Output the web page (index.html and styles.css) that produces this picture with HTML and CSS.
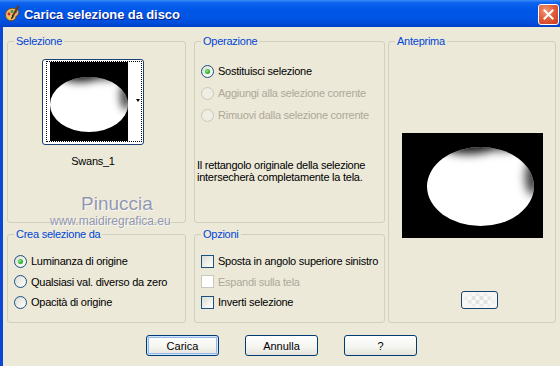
FILE: index.html
```html
<!DOCTYPE html>
<html lang="it">
<head>
    <meta charset="UTF-8">
    <title>Carica selezione da disco</title>
    <link rel="stylesheet" href="styles.css">
</head>
<body>
    <div class="window">
        <div class="titlebar">
            <svg class="app-icon" width="17" height="18" viewBox="0 0 17 18">
                <path d="M1.5 10 C1.5 5 6 2.5 10.5 3.5 C15 4.5 16 8.5 13 10.5 C11 11.8 12.5 13.5 10 15 C6 17 1.5 14.5 1.5 10Z" fill="#E9B774" stroke="#7A4A14" stroke-width="1"/>
                <circle cx="5" cy="9" r="1.4" fill="#D8261E"/>
                <circle cx="8" cy="6.5" r="1.4" fill="#2AA630"/>
                <circle cx="11.5" cy="7" r="1.3" fill="#2250D8"/>
                <circle cx="6" cy="12.8" r="1.4" fill="#F2D82A"/>
                <path d="M14.5 0.8 L8.5 11.5" stroke="#6B3A10" stroke-width="2"/>
                <path d="M9 10.5 L7.2 13.8 L8.8 12.6Z" fill="#222" stroke="#222" stroke-width="1"/>
            </svg>
            <span class="title">Carica selezione da disco</span>
            <button class="close" type="button">
                <svg width="11" height="11" viewBox="0 0 11 11">
                    <path d="M1.5 1.5 L9.5 9.5 M9.5 1.5 L1.5 9.5" stroke="#fff" stroke-width="2" stroke-linecap="square"/>
                </svg>
            </button>
        </div>

        <div class="client">
            <div class="groups">
                <fieldset class="group g-sel">
                    <legend>Selezione</legend>
                    <div class="picker">
                        <div class="thumb">
                            <div class="thumb-focus">
                                <svg width="78" height="79" viewBox="0 0 78 79">
                                    <defs>
                                        <clipPath id="clip1">
                                            <ellipse cx="39" cy="42.5" rx="39" ry="27.5"/>
                                        </clipPath>
                                        <filter id="soft1" x="-50%" y="-50%" width="200%" height="200%">
                                            <feGaussianBlur stdDeviation="4"/>
                                        </filter>
                                    </defs>
                                    <rect width="78" height="79" fill="#000"/>
                                    <g clip-path="url(#clip1)">
                                        <rect width="78" height="79" fill="#fff"/>
                                        <g filter="url(#soft1)">
                                            <ellipse cx="30" cy="13" rx="20" ry="7" fill="#000" opacity="0.9"/>
                                            <ellipse cx="55" cy="13" rx="16" ry="5" fill="#000" opacity="0.7"/>
                                            <ellipse cx="76" cy="34" rx="6" ry="14" fill="#000" opacity="0.75"/>
                                        </g>
                                    </g>
                                </svg>
                                <div class="thumb-arrow"><span></span></div>
                            </div>
                        </div>
                        <div class="caption">Swans_1</div>
                    </div>
                </fieldset>

                <fieldset class="group g-op">
                    <legend>Operazione</legend>
                    <div class="options">
                        <div class="row"><span class="radio checked"></span>Sostituisci selezione</div>
                        <div class="row disabled"><span class="radio"></span>Aggiungi alla selezione corrente</div>
                        <div class="row disabled"><span class="radio"></span>Rimuovi dalla selezione corrente</div>
                    </div>
                    <p class="note">Il rettangolo originale della selezione intersecherà completamente la tela.</p>
                </fieldset>

                <fieldset class="group g-prev">
                    <legend>Anteprima</legend>
                    <div class="preview">
                        <svg width="141" height="105" viewBox="0 0 141 105">
                            <defs>
                                <clipPath id="clip2">
                                    <ellipse cx="78.5" cy="53.5" rx="53.5" ry="39.5"/>
                                </clipPath>
                                <filter id="soft2" x="-50%" y="-50%" width="200%" height="200%">
                                    <feGaussianBlur stdDeviation="5"/>
                                </filter>
                            </defs>
                            <rect width="141" height="105" fill="#000"/>
                            <g clip-path="url(#clip2)">
                                <rect width="141" height="105" fill="#fff"/>
                                <g filter="url(#soft2)">
                                    <ellipse cx="66" cy="12" rx="28" ry="9" fill="#000" opacity="0.9"/>
                                    <ellipse cx="100" cy="12" rx="22" ry="6" fill="#000" opacity="0.7"/>
                                    <ellipse cx="131" cy="44" rx="8" ry="18" fill="#000" opacity="0.75"/>
                                </g>
                            </g>
                        </svg>
                    </div>
                    <button class="bg-btn" type="button"></button>
                </fieldset>

                <fieldset class="group g-crea">
                    <legend>Crea selezione da</legend>
                    <div class="options small">
                        <div class="row"><span class="radio checked"></span>Luminanza di origine</div>
                        <div class="row"><span class="radio"></span>Qualsiasi val. diverso da zero</div>
                        <div class="row"><span class="radio"></span>Opacità di origine</div>
                    </div>
                </fieldset>

                <fieldset class="group g-opz">
                    <legend>Opzioni</legend>
                    <div class="options small">
                        <div class="row"><span class="check"></span>Sposta in angolo superiore sinistro</div>
                        <div class="row disabled"><span class="check"></span>Espandi sulla tela</div>
                        <div class="row"><span class="check"></span>Inverti selezione</div>
                    </div>
                </fieldset>
            </div>

            <div class="buttons">
                <button class="btn default" type="button">Carica</button>
                <button class="btn" type="button">Annulla</button>
                <button class="btn" type="button">?</button>
            </div>

            <div class="watermark">
                <div class="wm-name">Pinuccia</div>
                <div class="wm-site">www.maidiregrafica.eu</div>
            </div>
        </div>
    </div>
</body>
</html>
```

FILE: styles.css
```css
body {
    margin: 0;
    font-family: "Liberation Sans", Arial, sans-serif;
    font-size: 11px;
    letter-spacing: -0.25px;
    color: #000;
    background-color: #ECE9D8;
}
.window {
    width: 560px;
    height: 366px;
    display: flex;
    flex-direction: column;
    overflow: hidden;
}

/* Title bar */
.titlebar {
    height: 27px;
    flex: none;
    display: flex;
    align-items: center;
    padding: 0 1px 0 4px;
    background: linear-gradient(to bottom, #3B8CF8 0%, #0E63EE 10%, #0058E8 35%, #0055E4 65%, #004BD8 88%, #003FC4 100%);
}
.app-icon {
    flex: none;
    margin-top: 1px;
}
.title {
    margin-left: 3px;
    color: #fff;
    font-weight: bold;
    font-size: 13px;
    letter-spacing: -0.1px;
    text-shadow: 1px 1px 0 #0A1E8C;
    flex: 1;
    padding-top: 1px;
}
.close {
    width: 21px;
    height: 21px;
    padding: 0;
    border: 1px solid #fff;
    border-radius: 3px;
    background: radial-gradient(circle at 35% 30%, #F09878 0%, #E2603C 45%, #C8381C 100%);
    display: flex;
    align-items: center;
    justify-content: center;
    margin-top: 1px;
}

/* Client area */
.client {
    flex: 1;
    position: relative;
    border-left: 3px solid #0B47D6;
    padding: 8px 0 0 4px;
}
.groups {
    display: grid;
    grid-template-columns: 187px 194px 168px;
    grid-template-rows: 188px 95px;
    row-gap: 5px;
    grid-template-areas:
        "sel op prev"
        "crea opz prev";
}
.group {
    margin: 0;
    padding: 0;
    border: 1px solid #D0D0BF;
    border-radius: 3px;
    box-sizing: border-box;
    min-width: 0;
}
.group legend {
    margin-left: 6px;
    padding: 0 2px;
    line-height: 13px;
    color: #0046D5;
}
.g-sel { grid-area: sel; width: 179px; }
.g-op { grid-area: op; width: 191px; }
.g-prev { grid-area: prev; width: 168px; }
.g-crea { grid-area: crea; width: 179px; }
.g-opz { grid-area: opz; width: 191px; }

/* Selection picker */
.picker {
    width: 102px;
    margin: 11px 0 0 34px;
    display: flex;
    flex-direction: column;
    align-items: center;
}
.thumb {
    width: 102px;
    height: 86px;
    box-sizing: border-box;
    border: 1px solid #1C3F74;
    border-radius: 3px;
    background-color: #fff;
    padding: 1px 1px 2px 3px;
}
.thumb-focus {
    height: 81px;
    box-sizing: border-box;
    border: 1px dotted #000;
    display: flex;
    padding-left: 3px;
}
.thumb-focus svg {
    display: block;
}
.thumb-arrow {
    flex: 1;
    display: flex;
    align-items: center;
    justify-content: flex-end;
    padding-right: 1px;
}
.thumb-arrow span {
    width: 0;
    height: 0;
    border-left: 2.5px solid transparent;
    border-right: 2.5px solid transparent;
    border-top: 3px solid #000;
    margin-bottom: 3px;
}
.caption {
    margin-top: 10px;
    line-height: 13px;
}

/* Radios and check boxes */
.options {
    margin: 12px 0 0 6px;
}
.options .row {
    height: 22px;
    display: flex;
    align-items: center;
    gap: 4px;
    white-space: nowrap;
}
.options.small {
    margin-top: 10px;
}
.options.small .row {
    height: 20.5px;
}
.row.disabled {
    color: #ACA899;
}
.radio {
    width: 13px;
    height: 13px;
    flex: none;
    box-sizing: border-box;
    border: 1px solid #1C5180;
    border-radius: 50%;
    background: linear-gradient(135deg, #DCDCD4 0%, #F2F2EE 60%, #fff 100%);
    display: flex;
    align-items: center;
    justify-content: center;
}
.radio.checked::after {
    content: "";
    width: 5px;
    height: 5px;
    border-radius: 50%;
    background: radial-gradient(circle at 40% 40%, #8CF08C 0%, #2DB22D 55%, #1A8C1A 100%);
}
.disabled .radio {
    border-color: #CAC8BB;
    background: #F0EEE4;
}
.check {
    width: 13px;
    height: 13px;
    flex: none;
    box-sizing: border-box;
    border: 1px solid #1C5180;
    background: linear-gradient(135deg, #DCDCD4 0%, #F2F2EE 60%, #fff 100%);
}
.disabled .check {
    border-color: #CAC8BB;
    background: #fff;
}
.note {
    margin: 33px 0 0 2px;
    line-height: 12px;
}

/* Preview */
.g-prev {
    display: flex;
    flex-direction: column;
}
.preview {
    margin: 85px auto 0;
    height: 105px;
}
.preview svg {
    display: block;
}
.bg-btn {
    width: 37px;
    height: 18px;
    margin: 53px 0 0 72px;
    padding: 0;
    box-sizing: border-box;
    border: 1px solid #1C3F74;
    border-radius: 3px;
    background:
        radial-gradient(ellipse at center, rgba(255, 255, 255, 0) 30%, #F6F6F3 75%),
        repeating-conic-gradient(#E2E2E2 0 25%, #FAFAFA 0 50%) 50% 50% / 8px 8px;
}

/* Dialog buttons */
.buttons {
    display: flex;
    justify-content: center;
    gap: 26px;
    margin-top: 12px;
    padding-right: 4px;
}
.btn {
    width: 73px;
    height: 21px;
    padding: 0;
    border: 1px solid #003C74;
    border-radius: 3px;
    background: linear-gradient(to bottom, #FFFFFF 0%, #F4F4F0 60%, #E4E2D8 100%);
    font-family: "Liberation Sans", Arial, sans-serif;
    font-size: 11px;
    color: #000;
}
.btn.default {
    box-shadow: inset 0 0 0 1px #CEE7FF, inset 0 0 0 2px #98B8EA;
}

/* Watermark over the dialog */
.watermark {
    position: absolute;
    left: 47px;
    top: 166px;
    color: rgba(108, 116, 160, 0.72);
    text-shadow: 1px 1px 0 rgba(255, 255, 255, 0.7);
    letter-spacing: 0;
}
.wm-name {
    font-size: 19px;
    line-height: 22px;
    margin-left: 31px;
}
.wm-site {
    font-size: 12px;
    line-height: 14px;
    margin-top: -1px;
}
```
